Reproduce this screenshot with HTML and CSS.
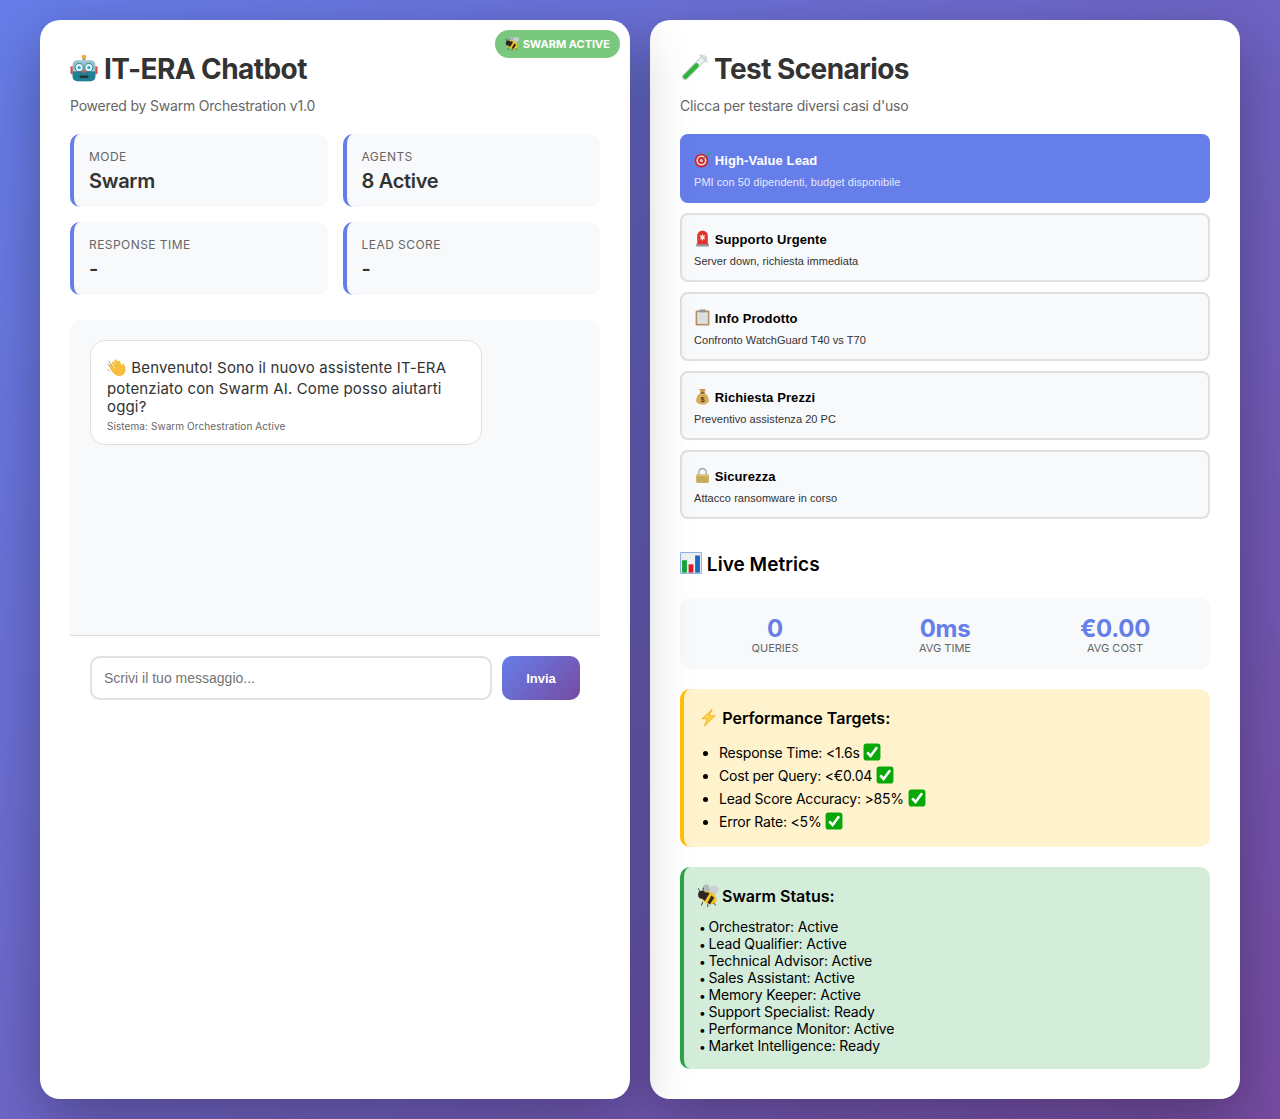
FILE: index.html
```html
<!DOCTYPE html>
<html lang="it">
<head>
  <meta charset="UTF-8" />
  <meta name="viewport" content="width=device-width, initial-scale=1" />
  <title>IT-ERA Chatbot</title>
  <link rel="stylesheet" href="styles.css">
</head>
<body>
  <svg class="sprites" aria-hidden="true">
    <symbol id="e-robot" viewBox="0 0 32 32">
      <rect x="14.500" y="2" width="3" height="5" fill="#7d6aa8"/><circle cx="16" cy="3.500" r="2.600" fill="#f2a93b"/>
      <rect x="0.500" y="14" width="4" height="9" rx="1.500" fill="#d9504a"/><rect x="27.500" y="14" width="4" height="9" rx="1.500" fill="#d9504a"/>
      <rect x="3" y="7" width="26" height="24" rx="5" fill="#9cc3cf"/>
      <path d="M3 20h26v6a5 5 0 0 1-5 5H8a5 5 0 0 1-5-5z" fill="#1f7f93"/>
      <circle cx="10.500" cy="15.500" r="4.600" fill="#e4f8fc" stroke="#2d6c82"/><circle cx="21.500" cy="15.500" r="4.600" fill="#e4f8fc" stroke="#2d6c82"/>
      <circle cx="10.500" cy="15.500" r="1.800" fill="#26a7d8"/><circle cx="21.500" cy="15.500" r="1.800" fill="#26a7d8"/>
      <path d="M16 17l2.500 4h-5z" fill="#e0584e"/><rect x="11" y="24.500" width="10" height="3" rx="1" fill="#26343c"/>
    </symbol>
    <symbol id="e-bee" viewBox="0 0 32 32">
      <ellipse cx="22" cy="9" rx="8.500" ry="6" transform="rotate(-30 22 9)" fill="#c9cdd0" opacity=".9"/>
      <ellipse cx="13" cy="7" rx="4.500" ry="6.500" transform="rotate(-10 13 7)" fill="#aeb4b8" opacity=".9"/>
      <ellipse cx="16" cy="19" rx="12" ry="8.500" transform="rotate(28 16 19)" fill="#f4c22b"/>
      <path d="M13 11l-5.500 9.500 3.500 3L17.500 13zM20 16l-5.500 10.500 3.500 1.500L24 19z" fill="#2d2620"/>
      <circle cx="7" cy="15" r="5.500" fill="#2d2620"/>
      <path d="M4 11L2 6M8 10l1-5M8 25l-2 5M15 28l0 4M23 26l3 4" stroke="#2d2620" stroke-width="1.200" fill="none"/>
    </symbol>
    <symbol id="e-tube" viewBox="0 0 32 32">
      <path d="M27 5L6 26" stroke="#b8c3c6" stroke-width="7" stroke-linecap="round"/>
      <path d="M27 5L6 26" stroke="#eef2f3" stroke-width="5" stroke-linecap="round"/>
      <path d="M19 13L6 26" stroke="#2db53a" stroke-width="5" stroke-linecap="round"/>
      <path d="M23.500 1.500l7 7" stroke="#ccd5d8" stroke-width="2.500" stroke-linecap="round"/>
    </symbol>
    <symbol id="e-target" viewBox="0 0 32 32">
      <circle cx="14" cy="18" r="13" fill="#c9252d"/><circle cx="14" cy="18" r="9.500" fill="#f2dcd6"/>
      <circle cx="14" cy="18" r="6.500" fill="#c9252d"/><circle cx="14" cy="18" r="3" fill="#f2dcd6"/>
      <path d="M14 18L26 6" stroke="#5b6b70" stroke-width="1.800"/><path d="M24 4l5-3 1 1 1.500 1-3 5-3 1-2-2z" fill="#2aa6a0"/>
    </symbol>
    <symbol id="e-siren" viewBox="0 0 32 32">
      <rect x="4" y="26" width="24" height="5" rx="1.500" fill="#8f979b"/>
      <path d="M6 27V11a10 10 0 0 1 20 0v16z" fill="#e2342e"/>
      <path d="M16 7l1.500 4 4-1-2.500 4 2.500 4-4-1-1.500 4-1.500-4-4 1 2.500-4-2.500-4 4 1z" fill="#ffe3dc"/>
    </symbol>
    <symbol id="e-clip" viewBox="0 0 32 32">
      <rect x="3" y="3" width="26" height="28" rx="2" fill="#b98d62"/>
      <rect x="6" y="6" width="20" height="22" fill="#dfe1e2"/>
      <rect x="10" y="1" width="12" height="5" rx="1" fill="#8d9599"/>
      <path d="M9 12h14M9 16h14M9 20h14" stroke="#cdd0d1" stroke-width="1"/>
    </symbol>
    <symbol id="e-bag" viewBox="0 0 32 32">
      <path d="M10 2h12l-3 7h-6z" fill="#c79a4a"/>
      <path d="M13 9h6c6 3 9 9 9 14 0 5-4 8-12 8S4 28 4 23c0-5 3-11 9-14z" fill="#d9ab5a"/>
      <rect x="12" y="8" width="8" height="2.500" rx="1" fill="#5c4a2a"/>
      <text x="16" y="26.500" text-anchor="middle" font-family="Liberation Sans" font-size="14" font-weight="700" fill="#4a3a1c">$</text>
    </symbol>
    <symbol id="e-lock" viewBox="0 0 32 32">
      <path d="M9 15V10a7 7 0 0 1 14 0v5" fill="none" stroke="#a8b0b4" stroke-width="3"/>
      <rect x="4" y="14" width="24" height="16" rx="2.500" fill="#c6ad5e"/>
      <rect x="4" y="14" width="24" height="3" fill="#dcc77f"/>
    </symbol>
    <symbol id="e-chart" viewBox="0 0 32 32">
      <rect x="1" y="1" width="30" height="30" fill="#eef0f1"/>
      <rect x="1" y="1" width="30" height="30" fill="none" stroke="#5b8fd0" stroke-width="1"/>
      <rect x="3" y="12" width="7" height="18" fill="#12a33a"/>
      <rect x="12.500" y="18" width="7" height="12" fill="#d81f26"/>
      <rect x="22" y="5" width="7" height="25" fill="#1669c9"/>
    </symbol>
    <symbol id="e-zap" viewBox="0 0 32 32">
      <path d="M22 2L5 18h9l-5 12 18-17h-9.500z" fill="#fcd34d" stroke="#f59e0b" stroke-width="1.200" stroke-linejoin="round"/>
    </symbol>
    <symbol id="e-check" viewBox="0 0 32 32">
      <rect x="1" y="1" width="30" height="30" rx="5" fill="#08a808"/>
      <path d="M7.500 16.500l6 6.500L25 7.500" fill="none" stroke="#fff" stroke-width="4.500"/>
    </symbol>
    <symbol id="e-wave" viewBox="0 0 32 32">
      <path d="M14 24L6 13M17 21L10 9M20 19L14 6M23 18L19 8" stroke="#f7bf3f" stroke-width="4.200" stroke-linecap="round" fill="none"/>
      <path d="M27 11c3 5 4 11 1 15-3 5-10 6-15 2-3-2-6-6-8-9-1-2 1-4 3-2l4 3 3-6 10-2c1-2 1-3 2-1z" fill="#f7bf3f"/>
      <path d="M1 11l4 5M3 7l3 4M1 20l3 3" stroke="#8d9fb0" stroke-width="1.500" stroke-linecap="round"/>
    </symbol>
  </svg>

  <main class="page">
    <section class="panel panel-left">
      <span class="badge"><svg class="emoji"><use href="#e-bee"/></svg> SWARM ACTIVE</span>
      <h1 class="title"><svg class="emoji"><use href="#e-robot"/></svg> IT-ERA Chatbot</h1>
      <p class="subtitle">Powered by Swarm Orchestration v1.0</p>

      <div class="stats">
        <div class="stat"><div class="stat-label">MODE</div><div class="stat-value">Swarm</div></div>
        <div class="stat"><div class="stat-label">AGENTS</div><div class="stat-value">8 Active</div></div>
        <div class="stat"><div class="stat-label">RESPONSE TIME</div><div class="stat-value">-</div></div>
        <div class="stat"><div class="stat-label">LEAD SCORE</div><div class="stat-value">-</div></div>
      </div>

      <div class="chat-log">
        <div class="bubble">
          <svg class="emoji"><use href="#e-wave"/></svg> Benvenuto! Sono il nuovo assistente IT-ERA potenziato con Swarm AI. Come posso aiutarti oggi?
          <div class="bubble-meta">Sistema: Swarm Orchestration Active</div>
        </div>
      </div>
      <div class="chat-input">
        <input type="text" placeholder="Scrivi il tuo messaggio...">
        <button class="send-btn">Invia</button>
      </div>
    </section>

    <section class="panel">
      <h1 class="title"><svg class="emoji"><use href="#e-tube"/></svg> Test Scenarios</h1>
      <p class="subtitle">Clicca per testare diversi casi d'uso</p>

      <div class="scenarios">
        <button class="scenario active">
          <span class="scenario-name"><svg class="emoji"><use href="#e-target"/></svg> High-Value Lead</span>
          <span class="scenario-desc">PMI con 50 dipendenti, budget disponibile</span>
        </button>
        <button class="scenario">
          <span class="scenario-name"><svg class="emoji"><use href="#e-siren"/></svg> Supporto Urgente</span>
          <span class="scenario-desc">Server down, richiesta immediata</span>
        </button>
        <button class="scenario">
          <span class="scenario-name"><svg class="emoji"><use href="#e-clip"/></svg> Info Prodotto</span>
          <span class="scenario-desc">Confronto WatchGuard T40 vs T70</span>
        </button>
        <button class="scenario">
          <span class="scenario-name"><svg class="emoji"><use href="#e-bag"/></svg> Richiesta Prezzi</span>
          <span class="scenario-desc">Preventivo assistenza 20 PC</span>
        </button>
        <button class="scenario">
          <span class="scenario-name"><svg class="emoji"><use href="#e-lock"/></svg> Sicurezza</span>
          <span class="scenario-desc">Attacco ransomware in corso</span>
        </button>
      </div>

      <h3 class="section-title"><svg class="emoji"><use href="#e-chart"/></svg> Live Metrics</h3>
      <div class="metrics">
        <div class="metric"><div class="metric-value">0</div><div class="metric-label">QUERIES</div></div>
        <div class="metric"><div class="metric-value">0ms</div><div class="metric-label">AVG TIME</div></div>
        <div class="metric"><div class="metric-value">€0.00</div><div class="metric-label">AVG COST</div></div>
      </div>

      <div class="note note-yellow">
        <h4 class="note-title"><svg class="emoji"><use href="#e-zap"/></svg> Performance Targets:</h4>
        <ul class="targets">
          <li>Response Time: &lt;1.6s <svg class="emoji"><use href="#e-check"/></svg></li>
          <li>Cost per Query: &lt;€0.04 <svg class="emoji"><use href="#e-check"/></svg></li>
          <li>Lead Score Accuracy: &gt;85% <svg class="emoji"><use href="#e-check"/></svg></li>
          <li>Error Rate: &lt;5% <svg class="emoji"><use href="#e-check"/></svg></li>
        </ul>
      </div>

      <div class="note note-green">
        <h4 class="note-title"><svg class="emoji"><use href="#e-bee"/></svg> Swarm Status:</h4>
        <ul class="agents">
          <li>Orchestrator: Active</li>
          <li>Lead Qualifier: Active</li>
          <li>Technical Advisor: Active</li>
          <li>Sales Assistant: Active</li>
          <li>Memory Keeper: Active</li>
          <li>Support Specialist: Ready</li>
          <li>Performance Monitor: Active</li>
          <li>Market Intelligence: Ready</li>
        </ul>
      </div>
    </section>
  </main>
</body>
</html>
```

FILE: styles.css
```css
* {
  box-sizing: border-box;
  margin: 0;
  padding: 0;
}
body {
  font-family: Inter, "Liberation Sans", sans-serif;
  background: linear-gradient(135deg, #667eea 0%, #764ba2 100%);
  height: 1119px;
  overflow: hidden;
}
.sprites {
  display: none;
}
.emoji {
  display: inline-block;
  width: 1.2em;
  height: 1.2em;
  vertical-align: -0.2em;
}
.page {
  display: grid;
  grid-template-columns: 590px 590px;
  grid-template-rows: 1079px;
  gap: 20px;
  padding: 20px 40px;
  height: 1119px;
}
.panel {
  background: white;
  border-radius: 20px;
  padding: 30px;
  box-shadow: 0 20px 60px rgba(0,0,0,0.3);
}
.panel-left {
  position: relative;
}
.title {
  font-size: 28px;
  line-height: 36px;
  font-weight: 700;
  letter-spacing: -0.58px;
  color: #333;
  margin-bottom: 10px;
  padding-top: 1px;
  height: 36px;
}
.title .emoji {
  width: 1em;
  height: 1em;
  vertical-align: -0.12em;
}
.subtitle {
  font-size: 14px;
  line-height: 20px;
  letter-spacing: -0.2px;
  color: #666;
  margin-bottom: 18px;
}
.badge {
  position: absolute;
  top: 10px;
  right: 10px;
  height: 28px;
  padding: 0 10px;
  border-radius: 20px;
  background: #7ac77e;
  color: white;
  font-size: 11px;
  font-weight: 700;
  line-height: 28px;
  white-space: nowrap;
}
.badge .emoji {
  width: 1.35em;
  height: 1.35em;
  vertical-align: -0.3em;
}
.stats {
  display: grid;
  grid-template-columns: 1fr 1fr;
  gap: 15px;
  margin-bottom: 25px;
}
.stat {
  background: #f8f9fa;
  border-left: 4px solid #667eea;
  border-radius: 10px;
  padding: 15px;
  height: 73px;
}
.stat-label {
  font-size: 12px;
  line-height: 15px;
  color: #666;
  letter-spacing: 0.45px;
}
.stat-value {
  font-size: 20px;
  line-height: 24px;
  font-weight: 600;
  letter-spacing: -0.3px;
  color: #333;
  margin-top: 5px;
}
.chat-log {
  background: #f8f9fa;
  border-radius: 10px 10px 0 0;
  border-bottom: 1px solid #e0e0e0;
  height: 316px;
  padding: 20px;
}
.bubble {
  width: 392px;
  background: white;
  border: 1px solid #e0e0e0;
  border-radius: 15px;
  padding: 16px 16px 11px;
  font-size: 15px;
  line-height: 18px;
  letter-spacing: 0.15px;
  color: #333;
}
.bubble .emoji {
  width: 20px;
  height: 20px;
  margin-bottom: 3px;
  vertical-align: -7px;
}
.bubble-meta {
  font-size: 10px;
  line-height: 13px;
  letter-spacing: 0.08px;
  color: #666;
  margin-top: 4px;
}
.chat-input {
  display: flex;
  gap: 10px;
  padding: 20px;
}
.chat-input input {
  flex: 1;
  height: 44px;
  border: 2px solid #e0e0e0;
  border-radius: 10px;
  padding: 0 12px;
  font-family: "Liberation Sans", sans-serif;
  font-size: 14px;
}
.send-btn {
  width: 78px;
  height: 44px;
  border: none;
  border-radius: 10px;
  background: linear-gradient(135deg, #667eea 0%, #764ba2 100%);
  color: white;
  font-family: "Liberation Sans", sans-serif;
  font-size: 13px;
  font-weight: 700;
}
.scenarios {
  display: flex;
  flex-direction: column;
  gap: 10px;
}
.scenario {
  display: block;
  width: 100%;
  height: 69px;
  text-align: left;
  background: #f8f9fa;
  border: 2px solid #e0e0e0;
  border-radius: 8px;
  padding: 14px 12px 12px;
  font-family: "Liberation Sans", sans-serif;
  color: #000;
}
.scenario.active {
  background: #667eea;
  border-color: #667eea;
  color: white;
}
.scenario-name {
  display: block;
  font-size: 13px;
  font-weight: 700;
  line-height: 20px;
  letter-spacing: 0.1px;
  height: 20px;
}
.scenario-name .emoji {
  width: 17px;
  height: 17px;
  vertical-align: -3px;
}
.scenario-desc {
  display: block;
  font-size: 11px;
  line-height: 13px;
  letter-spacing: 0.05px;
  margin-top: 5px;
  color: #333;
}
.scenario.active .scenario-desc {
  color: #e6e9fc;
}
.section-title {
  font-size: 19px;
  line-height: 26px;
  font-weight: 600;
  letter-spacing: 0.05px;
  color: #000;
  margin-top: 32px;
  margin-bottom: 21px;
  padding-top: 1px;
  height: 26px;
}
.section-title .emoji {
  width: 22px;
  height: 22px;
  vertical-align: -3px;
}
.metrics {
  display: grid;
  grid-template-columns: repeat(3, 1fr);
  background: #f8f9fa;
  border-radius: 10px;
  height: 71px;
  padding: 16px 10px 14px;
  margin-bottom: 20px;
  text-align: center;
}
.metric-value {
  font-size: 24px;
  line-height: 29px;
  font-weight: 700;
  letter-spacing: -0.3px;
  color: #667eea;
  height: 28px;
}
.metric-label {
  font-size: 11px;
  line-height: 13px;
  color: #666;
}
.note {
  border-radius: 10px;
  padding: 15px;
  margin-bottom: 20px;
  color: #000;
}
.note-yellow {
  background: #fff3cd;
  border-left: 4px solid #ffc107;
  height: 158px;
}
.note-green {
  background: #d4edda;
  border-left: 4px solid #28a745;
  height: 202px;
  margin-bottom: 0;
}
.note-green .note-title .emoji {
  width: 23px;
  height: 23px;
  margin: 0 -2px;
  vertical-align: -5px;
}
.note-title {
  font-size: 16px;
  line-height: 28px;
  height: 28px;
  font-weight: 600;
  margin-bottom: 9px;
}
.targets {
  padding-left: 20px;
  font-size: 14px;
  line-height: 23px;
  letter-spacing: -0.2px;
}
.targets .emoji {
  width: 18px;
  height: 18px;
  vertical-align: -3px;
}
.agents {
  list-style: none;
  font-size: 14px;
  line-height: 17px;
  letter-spacing: -0.15px;
  margin-top: -1px;
}
.agents li {
  height: 17px;
}
.agents li::before {
  content: "•";
  display: inline-block;
  width: 9.5px;
  font-size: 12px;
  line-height: 12px;
}
```
